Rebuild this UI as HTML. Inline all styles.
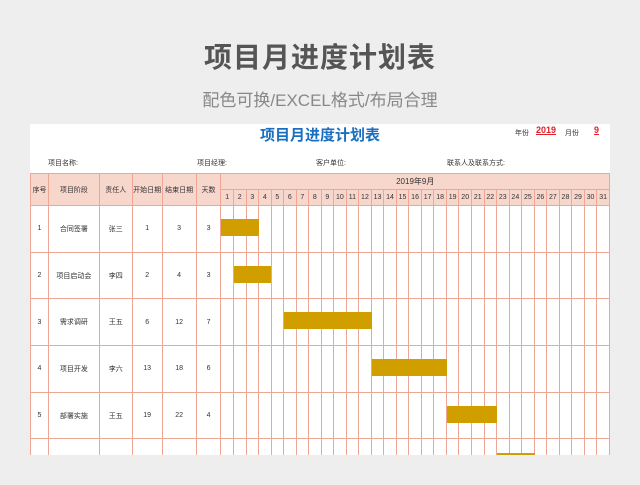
<!DOCTYPE html>
<html><head><meta charset="utf-8"><style>
body{margin:0;width:640px;height:485px;background:#eeeeee;overflow:hidden;position:relative;font-family:"Liberation Sans","Noto Sans CJK SC",sans-serif;}
.t1{position:absolute;top:36px;left:0;width:640px;text-align:center;font-size:28px;font-weight:bold;color:#555;letter-spacing:1px;}
.t2{position:absolute;top:86px;left:0;width:640px;text-align:center;font-size:17px;color:#888;}
.card{position:absolute;left:30px;top:124px;width:580px;height:331px;background:#fff;overflow:hidden;}
.ti{position:absolute;left:0;top:0;width:580px;text-align:center;font-size:15px;font-weight:bold;color:#1a6fc0;top:0;}
.s{position:absolute;font-size:7px;color:#333;}
.r{color:#e0202a;font-weight:bold;font-size:9px;text-decoration:underline;}
table{position:absolute;left:0;top:49px;border-collapse:collapse;table-layout:fixed;}
td{border:1px solid #f0a694;font-size:7px;color:#333;text-align:center;padding:0;height:45.7px;}
tr.h td{background:#f7d6cc;height:15px;font-size:7px;}
tr.h td.m{font-size:8px;}
.bar{position:absolute;background:#d19e00;height:17px;}
</style></head><body>
<div class="t1">项目月进度计划表</div>
<div class="t2">配色可换/EXCEL格式/布局合理</div>
<div class="card">
<div class="ti">项目月进度计划表</div>
<div class="s" style="left:485px;top:4px">年份</div>
<div class="s r" style="left:506px;top:1px">2019</div>
<div class="s" style="left:535px;top:4px">月份</div>
<div class="s r" style="left:564px;top:1px">9</div>
<div class="s" style="left:18px;top:34px">项目名称:</div>
<div class="s" style="left:167px;top:34px">项目经理:</div>
<div class="s" style="left:286px;top:34px">客户单位:</div>
<div class="s" style="left:417px;top:34px">联系人及联系方式:</div>
<table id="tb">
<colgroup><col style="width:18px"><col style="width:51px"><col style="width:33px"><col style="width:30px"><col style="width:34px"><col style="width:25px"></colgroup>
</table>
<div id="bars"></div>
</div>
<script>
var tb=document.getElementById('tb'),cg=tb.querySelector('colgroup');
var dw=389/31;
for(var i=0;i<31;i++){var c=document.createElement('col');c.style.width=dw+'px';cg.appendChild(c);}
var h='<tr class="h"><td rowspan="2">序号</td><td rowspan="2">项目阶段</td><td rowspan="2">责任人</td><td rowspan="2">开始日期</td><td rowspan="2">结束日期</td><td rowspan="2">天数</td><td colspan="31" class="m">2019年9月</td></tr><tr class="h">';
for(var i=1;i<=31;i++)h+='<td>'+i+'</td>';
h+='</tr>';
var rows=[[1,'合同签署','张三',1,3,3],[2,'项目启动会','李四',2,4,3],[3,'需求调研','王五',6,12,7],[4,'项目开发','李六',13,18,6],[5,'部署实施','王五',19,22,4],['','','',23,25,'']];
rows.forEach(function(r){h+='<tr><td>'+r[0]+'</td><td>'+r[1]+'</td><td>'+r[2]+'</td><td>'+(r[0]?r[3]:'')+'</td><td>'+(r[0]?r[4]:'')+'</td><td>'+r[5]+'</td>';for(var i=0;i<31;i++)h+='<td></td>';h+='</tr>';});
tb.innerHTML+=h;
var b='';
rows.forEach(function(r,k){var x=191+(r[3]-1)*dw,w=(r[4]-r[3]+1)*dw;var y=95+k*46.7;b+='<div class="bar" style="left:'+x+'px;top:'+y+'px;width:'+w+'px"></div>';});
document.getElementById('bars').innerHTML=b;
</script>
</body></html>
